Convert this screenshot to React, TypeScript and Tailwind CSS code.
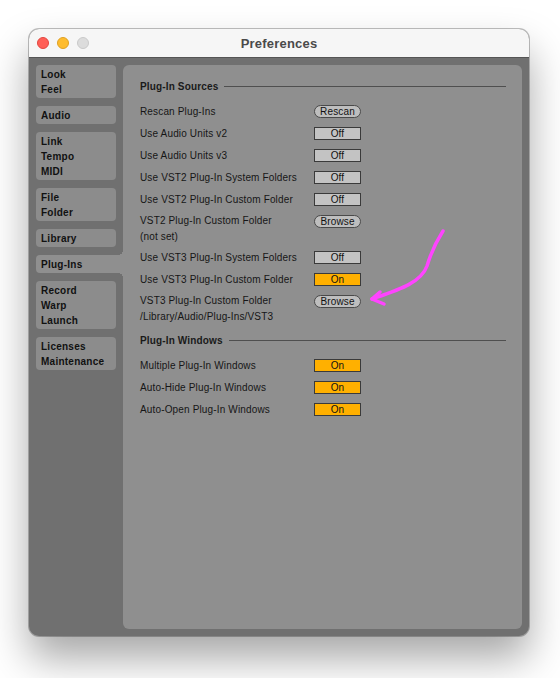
import React from "react";

type Row =
  | { label: string; sub?: string; kind: "off" | "on" | "pill"; text?: string };

const sources: Row[] = [
  { label: "Rescan Plug-Ins", kind: "pill", text: "Rescan" },
  { label: "Use Audio Units v2", kind: "off" },
  { label: "Use Audio Units v3", kind: "off" },
  { label: "Use VST2 Plug-In System Folders", kind: "off" },
  { label: "Use VST2 Plug-In Custom Folder", kind: "off" },
  { label: "VST2 Plug-In Custom Folder", sub: "(not set)", kind: "pill", text: "Browse" },
  { label: "Use VST3 Plug-In System Folders", kind: "off" },
  { label: "Use VST3 Plug-In Custom Folder", kind: "on" },
  {
    label: "VST3 Plug-In Custom Folder",
    sub: "/Library/Audio/Plug-Ins/VST3",
    kind: "pill",
    text: "Browse",
  },
];

const windows: Row[] = [
  { label: "Multiple Plug-In Windows", kind: "on" },
  { label: "Auto-Hide Plug-In Windows", kind: "on" },
  { label: "Auto-Open Plug-In Windows", kind: "on" },
];

const tabs = [
  ["Look", "Feel"],
  ["Audio"],
  ["Link", "Tempo", "MIDI"],
  ["File", "Folder"],
  ["Library"],
  ["Plug-Ins"],
  ["Record", "Warp", "Launch"],
  ["Licenses", "Maintenance"],
];

function Control({ row }: { row: Row }) {
  if (row.kind === "pill") {
    return (
      <div className="w-[47px] h-[13px] rounded-full border border-[#4a4a4a] bg-[#bebebe] text-center text-[10px] leading-[11px] text-[#111]">
        {row.text}
      </div>
    );
  }
  return (
    <div
      className={`w-[47px] h-[13px] border border-[#3a3a3a] text-center text-[10px] leading-[11px] text-[#111] ${
        row.kind === "on" ? "bg-[#ffb000]" : "bg-[#c3c3c3]"
      }`}
    >
      {row.kind === "on" ? "On" : "Off"}
    </div>
  );
}

function SettingRow({ row }: { row: Row }) {
  if (row.sub) {
    return (
      <div className="flex h-[36px] pt-[3px]">
        <div className="w-[174px] leading-[16px]">
          <div>{row.label}</div>
          <div>{row.sub}</div>
        </div>
        <div className="pt-[1.5px]">
          <Control row={row} />
        </div>
      </div>
    );
  }
  return (
    <div className="flex h-[22px] items-center">
      <div className="w-[174px]">{row.label}</div>
      <Control row={row} />
    </div>
  );
}

function Header({ title }: { title: string }) {
  return (
    <div className="flex h-[22px] items-center font-bold text-[#1a1a1a]">
      <span>{title}</span>
      <div className="ml-[6px] h-px flex-1 bg-[#4f4f4f]" />
    </div>
  );
}

export default function App() {
  return (
    <div
      className="relative w-[560px] h-[678px] bg-white pt-[29px] pl-[29px]"
      style={{ fontFamily: '"Liberation Sans", Arial, sans-serif' }}
    >
      <div className="w-[500px] h-[607px] rounded-[10px] overflow-hidden bg-[#707070] ring-1 ring-black/25 shadow-[0_22px_40px_rgba(0,0,0,0.35)] flex flex-col">
        {/* Title bar */}
        <div className="relative h-[29px] shrink-0 bg-[#f6f6f6] border-b border-[#555] flex items-center justify-center pt-[1px]">
          <div className="absolute left-[8px] top-[8px] flex gap-[8px]">
            <div className="w-[12px] h-[12px] rounded-full bg-[#ff5f57] border border-[#e2463f]" />
            <div className="w-[12px] h-[12px] rounded-full bg-[#febc2e] border border-[#dfa123]" />
            <div className="w-[12px] h-[12px] rounded-full bg-[#dcdcdc] border border-[#c9c9c9]" />
          </div>
          <span className="text-[13px] font-bold text-[#4a4a4a] tracking-[0.2px]">
            Preferences
          </span>
        </div>

        {/* Body */}
        <div className="flex flex-1 p-[7px] gap-[7px]">
          <div className="w-[80px] flex flex-col gap-[8px] text-[10px] font-bold text-[#111] tracking-[0.25px]">
            {tabs.map((lines) => {
              const selected = lines[0] === "Plug-Ins";
              return (
                <div
                  key={lines[0]}
                  className={
                    selected
                      ? "relative w-[87px] rounded-l-[4px] bg-[#8f8f8f] pl-[5px] pt-[2px] pb-[1px] leading-[15px]"
                      : "rounded-[4px] bg-[#8c8c8c] pl-[5px] pt-[2px] pb-[1px] leading-[15px]"
                  }
                >
                  {lines.map((l) => (
                    <div key={l}>{l}</div>
                  ))}
                  {selected && (
                    <>
                      <div className="absolute right-0 top-[-5px] w-[5px] h-[5px] bg-[radial-gradient(circle_at_0_0,transparent_5px,#8f8f8f_5px)]" />
                      <div className="absolute right-0 bottom-[-5px] w-[5px] h-[5px] bg-[radial-gradient(circle_at_0_100%,transparent_5px,#8f8f8f_5px)]" />
                    </>
                  )}
                </div>
              );
            })}
          </div>

          <div className="flex-1 rounded-[6px] bg-[#8f8f8f] pt-[10px] pl-[17px] pr-[16px] text-[10px] text-[#161616] tracking-[0.15px]">
            <Header title="Plug-In Sources" />
            <div className="mt-[3px]">
              {sources.map((r) => (
                <SettingRow key={r.label} row={r} />
              ))}
            </div>
            <div className="mt-[3px]">
              <Header title="Plug-In Windows" />
            </div>
            <div className="mt-[3px]">
              {windows.map((r) => (
                <SettingRow key={r.label} row={r} />
              ))}
            </div>
          </div>
        </div>
      </div>

      {/* hand-drawn annotation arrow */}
      <svg
        className="absolute left-0 top-0 pointer-events-none"
        width="560"
        height="678"
        viewBox="0 0 560 678"
      >
        <g
          fill="none"
          stroke="#ff44ff"
          strokeWidth="3.5"
          strokeLinecap="round"
          strokeLinejoin="round"
        >
          <path d="M443 231 C 434 245, 430 256, 427 266 C 421 283, 398 290, 372 299" />
          <path d="M380 292 L 372 299 L 384 304" />
        </g>
      </svg>
    </div>
  );
}
